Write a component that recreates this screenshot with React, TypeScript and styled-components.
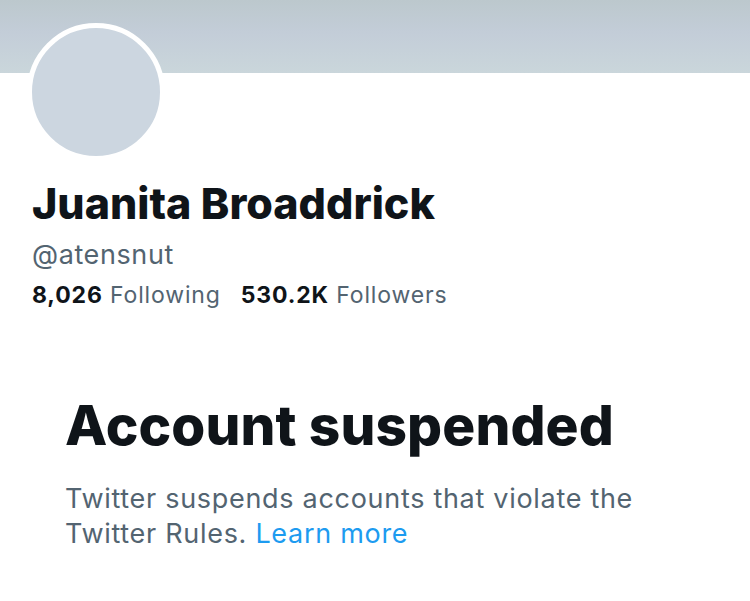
import styled, { createGlobalStyle } from "styled-components";

const GlobalStyle = createGlobalStyle`
  html, body {
    margin: 0;
    padding: 0;
    background: #ffffff;
  }
  body {
    font-family: Inter, "Liberation Sans", Arial, sans-serif;
    color: #0f1419;
    overflow: hidden;
  }
`;

const Page = styled.div`
  width: 750px;
  height: 601px;
  background: #ffffff;
  display: flex;
  flex-direction: column;
`;

const Banner = styled.div`
  height: 73px;
  background: linear-gradient(180deg, #bcc8cd 0%, #c3cdd8 45%, #cad6db 100%);
`;

const ProfileHeader = styled.div`
  display: flex;
  flex-direction: column;
  padding: 0 32px;
`;

const Avatar = styled.div`
  width: 138px;
  height: 138px;
  box-sizing: border-box;
  margin: -50px 0 0 -5px;
  border-radius: 50%;
  border: 5px solid #ffffff;
  background: #ccd6e0;
`;

const Name = styled.h1`
  margin: 18px 0 0;
  font-size: 43px;
  line-height: 48px;
  font-weight: 800;
  color: #0f1419;
`;

const Handle = styled.div`
  margin-top: 12px;
  font-size: 27px;
  line-height: 32px;
  letter-spacing: 0.6px;
  color: #536471;
`;

const Stats = styled.div`
  display: flex;
  gap: 20px;
  margin-top: 10px;
  font-size: 23px;
  line-height: 28px;
  letter-spacing: 0.85px;
`;

const Stat = styled.span`
  color: #536471;

  b {
    color: #0f1419;
    font-weight: 700;
  }
`;

const Notice = styled.section`
  padding: 86px 65px 0;
`;

const Title = styled.h2`
  margin: 0;
  font-size: 55px;
  line-height: 60px;
  font-weight: 800;
  letter-spacing: 0.1px;
  color: #0f1419;
`;

const Body = styled.p`
  margin: 26px 0 0;
  max-width: 590px;
  font-size: 27px;
  line-height: 35px;
  letter-spacing: 0.7px;
  color: #536471;

  a {
    color: #1d9bf0;
    text-decoration: none;
  }
`;

export default function App() {
  return (
    <Page>
      <GlobalStyle />
      <Banner />
      <ProfileHeader>
        <Avatar />
        <Name>Juanita Broaddrick</Name>
        <Handle>@atensnut</Handle>
        <Stats>
          <Stat>
            <b>8,026</b> Following
          </Stat>
          <Stat>
            <b>530.2K</b> Followers
          </Stat>
        </Stats>
      </ProfileHeader>
      <Notice>
        <Title>Account suspended</Title>
        <Body>
          Twitter suspends accounts that violate the Twitter Rules.{" "}
          <a href="#">Learn more</a>
        </Body>
      </Notice>
    </Page>
  );
}
